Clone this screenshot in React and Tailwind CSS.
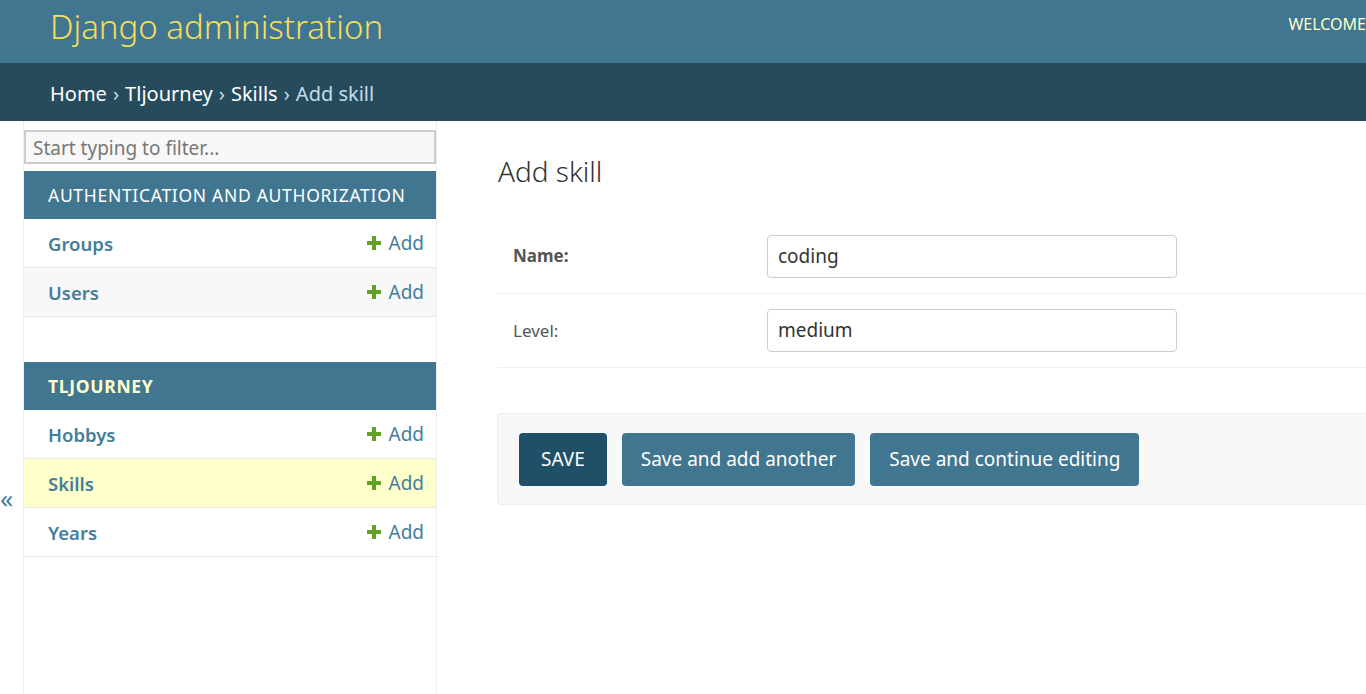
import React from 'react';

const font = { fontFamily: '"Noto Sans", "Open Sans", sans-serif' };

const PlusIcon = () => (
    <svg width="16" height="16" viewBox="0 0 16 16" className="inline-block">
        <path d="M6 1h4v5h5v4h-5v5H6v-5H1V6h5z" fill="#5fa225" />
    </svg>
);

const ModelRow = ({ name, active, shaded }) => (
    <div className={`flex items-center justify-between h-[49px] border-b border-[#e8e8e8] pl-6 pr-3 ${active ? 'bg-[#ffffcc]' : shaded ? 'bg-[#f8f8f8]' : 'bg-white'}`}>
        <span className="text-[18.5px] font-semibold text-[#447e9b] mt-[2px]">{name}</span>
        <span className="flex items-center gap-[6px] text-[19px] text-[#447e9b]"><PlusIcon /> Add</span>
    </div>
);

const App = () => {
    return (
        <div className="min-h-[694px] bg-white overflow-hidden" style={font}>
            {/* Header */}
            <div className="h-[63px] bg-[#417690] flex items-center justify-between pl-[50px]">
                <h1 className="text-[33px] font-light text-[#f5dd5d] leading-none -mt-[10px]">Django administration</h1>
                <div className="text-[16px] text-[#ffffcc] self-start mt-[12px] whitespace-nowrap">WELCOME</div>
            </div>
            {/* Breadcrumbs */}
            <div className="h-[58px] bg-[#264b5d] flex items-center pl-[50px] pt-[4px] text-[20px] text-[#c4dce8]">
                <span className="text-white">Home</span>
                <span className="mx-[6px]">›</span>
                <span className="text-white">Tljourney</span>
                <span className="mx-[6px]">›</span>
                <span className="text-white">Skills</span>
                <span className="mx-[6px]">›</span>
                <span>Add skill</span>
            </div>

            <div className="flex">
                {/* Collapse toggle */}
                <div className="w-[23px] pt-[364px] text-[#447e9b] text-[26px] leading-none">
                    <span>«</span>
                </div>
                {/* Sidebar */}
                <div className="w-[414px] border-x border-[#eeeeee] min-h-[573px]">
                    <div className="pt-[9px] pb-[7px]">
                        <div className="h-[34px] border-2 border-[#cccccc] bg-[#f8f8f8] flex items-center px-[7px] pt-[2px] text-[19px] text-[#777777]">
                            Start typing to filter...
                        </div>
                    </div>
                    <div className="h-[48px] bg-[#417690] flex items-center pl-6 text-[17.5px] tracking-[0.7px] text-white">
                        AUTHENTICATION AND AUTHORIZATION
                    </div>
                    <ModelRow name="Groups" />
                    <ModelRow name="Users" shaded />
                    <div className="h-[45px]" />
                    <div className="h-[48px] bg-[#417690] flex items-center pl-6 text-[17.5px] font-bold tracking-[0.7px] text-[#ffffcc]">
                        TLJOURNEY
                    </div>
                    <ModelRow name="Hobbys" />
                    <ModelRow name="Skills" active />
                    <ModelRow name="Years" />
                </div>

                {/* Main content */}
                <div className="flex-1 pl-[60px] pt-[36px]">
                    <h1 className="text-[28px] font-light text-[#333333] leading-none pl-[1px]">Add skill</h1>
                    <div className="mt-[50px]">
                        <div className="flex items-center h-[59px] border-b border-[#eeeeee]">
                            <label className="w-[270px] pl-[16px] text-[17px] font-bold text-[#555555] -mt-[16px]">Name:</label>
                            <div className="w-[410px] h-[43px] border border-[#cccccc] rounded-[4px] flex items-center px-[10px] text-[19px] text-[#333333] -mt-[16px]">coding</div>
                        </div>
                        <div className="flex items-center h-[74px] border-b border-[#eeeeee]">
                            <label className="w-[270px] pl-[16px] text-[17px] text-[#555555]">Level:</label>
                            <div className="w-[410px] h-[43px] border border-[#cccccc] rounded-[4px] flex items-center px-[10px] text-[19px] text-[#333333]">medium</div>
                        </div>
                    </div>
                    <div className="mt-[45px] h-[92px] bg-[#f8f8f8] border border-r-0 border-[#eeeeee] rounded-l-[4px] flex items-center gap-[15px] pl-[21px]">
                        <button className="h-[53px] px-[22px] rounded-[4px] bg-[#205067] text-white text-[19px]">SAVE</button>
                        <button className="h-[53px] px-[19px] rounded-[4px] bg-[#417690] text-white text-[19px]">Save and add another</button>
                        <button className="h-[53px] px-[19px] rounded-[4px] bg-[#417690] text-white text-[19px]">Save and continue editing</button>
                    </div>
                </div>
            </div>
        </div>
    );
};

export default App;
